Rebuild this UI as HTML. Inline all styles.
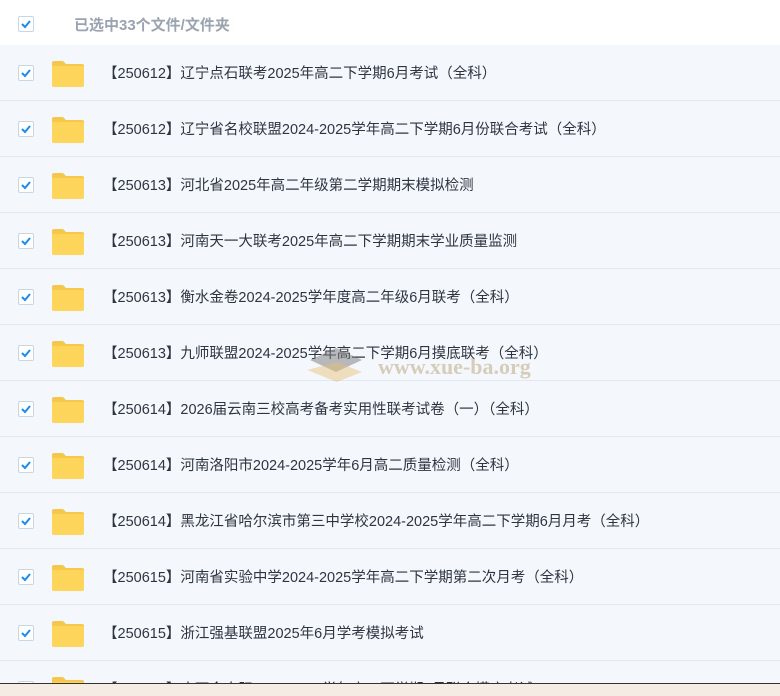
<!DOCTYPE html>
<html><head><meta charset="utf-8"><style>
html,body{margin:0;width:780px;height:696px;overflow:hidden}
body{background:#f4f8fd;font-family:"Liberation Sans","Noto Sans CJK SC",sans-serif;position:relative}
.hdr{position:absolute;left:0;top:0;width:780px;height:45px;background:#fff;}
.cb{position:absolute;left:18px;width:16px;height:16px;border:1px solid #c9d6e4;border-radius:2px;background:#fff;box-sizing:border-box}
.cb svg{position:absolute;left:1px;top:1px}
.hdr .t{position:absolute;left:74px;top:14px;font-size:15px;color:#9aa3b0;font-weight:bold}
.row{position:absolute;left:0;width:780px;height:56px;border-bottom:1px solid #dfe8f3;box-sizing:border-box}
.fold{position:absolute;left:51px;top:16px;width:33px;height:26px}
.row .t{position:absolute;left:103px;top:17px;font-size:14.5px;color:#2e3540;white-space:nowrap}
.bar{position:absolute;left:0;top:683px;width:780px;height:13px;background:#f5ece4;border-top:1px solid #333}
</style></head><body>
<div class="hdr"><div class="cb" style="top:16px"><svg width="12" height="12" viewBox="0 0 12 12"><path d="M2 6l3 3 5-6" stroke="#1a8cf0" stroke-width="2" fill="none"/></svg></div><div class="t">已选中33个文件/文件夹</div></div>
<div id="rows"></div>
<script>
var n=["【250612】辽宁点石联考2025年高二下学期6月考试（全科）","【250612】辽宁省名校联盟2024-2025学年高二下学期6月份联合考试（全科）","【250613】河北省2025年高二年级第二学期期末模拟检测","【250613】河南天一大联考2025年高二下学期期末学业质量监测","【250613】衡水金卷2024-2025学年度高二年级6月联考（全科）","【250613】九师联盟2024-2025学年高二下学期6月摸底联考（全科）","【250614】2026届云南三校高考备考实用性联考试卷（一）（全科）","【250614】河南洛阳市2024-2025学年6月高二质量检测（全科）","【250614】黑龙江省哈尔滨市第三中学校2024-2025学年高二下学期6月月考（全科）","【250615】河南省实验中学2024-2025学年高二下学期第二次月考（全科）","【250615】浙江强基联盟2025年6月学考模拟考试","【250616】广西金太阳2024-2025学年高二下学期6月联合摸底考试"];
var h="";n.forEach(function(s,i){h+='<div class="row" style="top:'+(45+56*i)+'px"><div class="cb" style="top:20px"><svg width="12" height="12" viewBox="0 0 12 12"><path d="M2 6l3 3 5-6" stroke="#1a8cf0" stroke-width="2" fill="none"/></svg></div><svg class="fold" viewBox="0 0 33 26"><path d="M1 2a2 2 0 0 1 2-2h9l3 3h16a2 2 0 0 1 2 2v19a2 2 0 0 1-2 2H3a2 2 0 0 1-2-2z" fill="#f5c84c"/><rect x="1" y="5" width="32" height="21" rx="2" fill="#fcd55a"/></svg><div class="t">'+s+'</div></div>';});
document.getElementById("rows").innerHTML=h;
</script>
<div style="position:absolute;left:378px;top:354px;font-family:'Liberation Serif',serif;font-weight:bold;font-size:22px;color:rgba(190,170,130,0.55)">www.xue-ba.org</div>
<svg style="position:absolute;left:302px;top:336px" width="70" height="56"><path d="M8 24l26-12 26 12-26 12z" fill="rgba(120,120,120,0.5)"/><path d="M5 34l30 12 25-10-25-10z" fill="rgba(230,190,110,0.45)"/></svg>
<div class="bar"></div>
</body></html>
